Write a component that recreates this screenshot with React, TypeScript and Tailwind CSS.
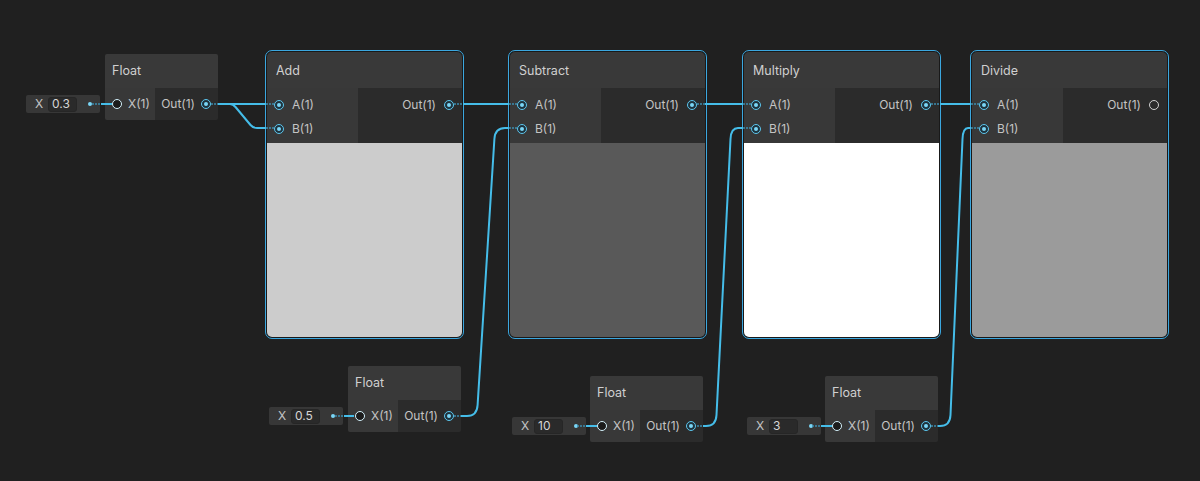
import React from "react";

type PortKind = "linked" | "hollowIn" | "hollowOut";

function Port({ kind }: { kind: PortKind }) {
  if (kind === "linked") {
    return (
      <span className="flex h-[10px] w-[10px] shrink-0 items-center justify-center rounded-full border-[1.5px] border-[#5cc6ee] bg-[#1f333d]">
        <span className="h-[4px] w-[4px] rounded-full bg-[#7ad6f6]" />
      </span>
    );
  }
  if (kind === "hollowIn") {
    return <span className="h-[10px] w-[10px] shrink-0 rounded-full border-[1.5px] border-[#d4f1fb] bg-[#1b1b1b]" />;
  }
  return <span className="h-[10px] w-[10px] shrink-0 rounded-full border-[1.5px] border-[#d0d0d0]" />;
}

const dots =
  "bg-[#2b2b2b] bg-[radial-gradient(circle,#303030_0.6px,transparent_0.7px)] bg-[length:4px_4px]";

function MathNode({
  left,
  title,
  preview,
  outLinked,
}: {
  left: number;
  title: string;
  preview: string;
  outLinked: boolean;
}) {
  return (
    <div
      className="absolute top-[50px] h-[289px] w-[199px] rounded-[7px] border border-[#3ba7df] bg-[#191919] p-px"
      style={{ left }}
    >
      <div className="flex h-full flex-col overflow-hidden rounded-[5px]">
        <div className="flex h-[36px] shrink-0 items-center bg-[#393939] pl-[9px] pt-[2px] text-[12.5px] text-[#d0d0d0]">
          {title}
        </div>
        <div className="flex h-[55px] shrink-0">
          <div className="flex w-[91px] flex-col bg-[#383838] pt-[5px]">
            {["A(1)", "B(1)"].map((p) => (
              <div key={p} className="flex h-[24px] items-center gap-[8px] pl-[7px]">
                <Port kind="linked" />
                <span>{p}</span>
              </div>
            ))}
          </div>
          <div className={`flex flex-1 flex-col pt-[5px] ${dots}`}>
            <div className="flex h-[24px] items-center justify-end gap-[8px] pr-[8px]">
              <span>Out(1)</span>
              <Port kind={outLinked ? "linked" : "hollowOut"} />
            </div>
          </div>
        </div>
        <div className="flex-1" style={{ backgroundColor: preview }} />
      </div>
    </div>
  );
}

function FloatNode({ left, top }: { left: number; top: number }) {
  return (
    <div className="absolute w-[113px] overflow-hidden rounded-[2px]" style={{ left, top }}>
      <div className="flex h-[34px] items-center bg-[#393939] pl-[7px] pt-[1px] text-[12.5px] text-[#d0d0d0]">
        Float
      </div>
      <div className="flex h-[32px]">
        <div className="flex w-[50px] items-center gap-[6px] bg-[#383838] pl-[7px]">
          <Port kind="hollowIn" />
          <span>X(1)</span>
        </div>
        <div className={`flex flex-1 items-center justify-end gap-[6px] pr-[7px] ${dots}`}>
          <span>Out(1)</span>
          <Port kind="linked" />
        </div>
      </div>
    </div>
  );
}

function Field({ left, top, value }: { left: number; top: number; value: string }) {
  return (
    <div
      className="absolute flex h-[18px] w-[74px] items-center rounded-[2px] bg-[#373737]"
      style={{ left, top }}
    >
      <span className="w-[22px] pl-[9px] text-[12px]">X</span>
      <span className="flex h-[15px] w-[29px] items-center rounded-[3px] border border-[#262626] bg-[#2a2a2a] pl-[3px] text-[12px] text-[#d6d6d6]">
        {value}
      </span>
      <span className="ml-auto mr-[8px] h-[4px] w-[4px] rounded-full bg-[#7ad6f6]" />
    </div>
  );
}

const bright = [
  "M218 104 H266",
  "M218 104 H230 Q233 104 235.5 107 L250.5 125 Q253 128 257 128 H266",
  "M463 104 H509",
  "M461 416 H467 Q477 416 477.6 405 L494.4 139 Q495 128 505 128 H509",
  "M705 104 H743",
  "M703 426 H706 Q716 426 716.5 415 L730.5 139 Q731 128 738 128 H743",
  "M940 104 H971",
  "M938 426 H940 Q950 426 950.5 415 L962.5 139 Q963 128 968 128 H971",
  "M101 104 H112",
  "M344 416 H354",
  "M586 426 H597",
  "M821 426 H832",
];

const dim = [
  "M211 104 H218",
  "M266 104 H274",
  "M266 128 H274",
  "M454 104 H463",
  "M509 104 H517",
  "M509 128 H517",
  "M454 416 H461",
  "M697 104 H705",
  "M743 104 H751",
  "M743 128 H751",
  "M697 426 H703",
  "M931 104 H940",
  "M971 104 H979",
  "M971 128 H979",
  "M931 426 H938",
  "M92 104 H101",
  "M335 416 H344",
  "M577 426 H586",
  "M812 426 H821",
];

export default function App() {
  return (
    <div className="relative h-[481px] w-[1200px] overflow-hidden bg-[#202020] font-['Inter','Noto_Sans',sans-serif] text-[12px] text-[#c4c4c4]">
      <MathNode left={265} title="Add" preview="#cccccc" outLinked />
      <MathNode left={508} title="Subtract" preview="#595959" outLinked />
      <MathNode left={742} title="Multiply" preview="#ffffff" outLinked />
      <MathNode left={970} title="Divide" preview="#9b9b9b" outLinked={false} />

      <FloatNode left={105} top={54} />
      <FloatNode left={348} top={366} />
      <FloatNode left={590} top={376} />
      <FloatNode left={825} top={376} />

      <Field left={26} top={95} value="0.3" />
      <Field left={269} top={407} value="0.5" />
      <Field left={512} top={417} value="10" />
      <Field left={747} top={417} value="3" />

      <svg className="pointer-events-none absolute inset-0 z-10" width="1200" height="481">
        {dim.map((d) => (
          <path key={d} d={d} fill="none" stroke="#3c8db0" strokeWidth="1.5" strokeDasharray="2 1" />
        ))}
        {bright.map((d) => (
          <path key={d} d={d} fill="none" stroke="#45bde9" strokeWidth="2" strokeLinejoin="round" />
        ))}
      </svg>
    </div>
  );
}
